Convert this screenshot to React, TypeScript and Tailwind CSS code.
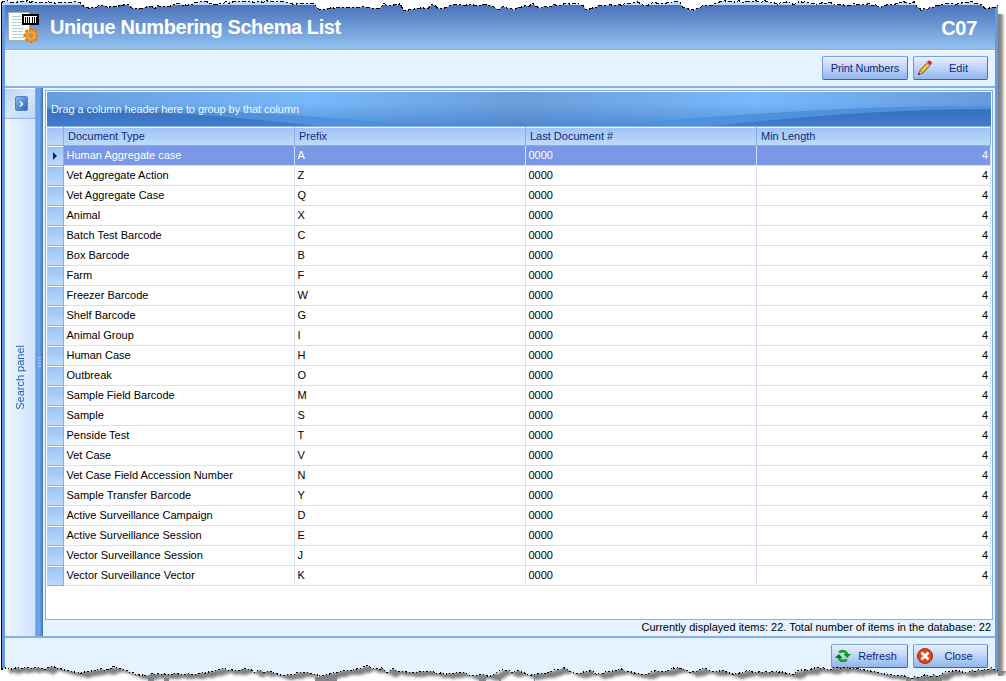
import React from "react";

const rows: [string, string][] = [
  ["Human Aggregate case", "A"],
  ["Vet Aggregate Action", "Z"],
  ["Vet Aggregate Case", "Q"],
  ["Animal", "X"],
  ["Batch Test Barcode", "C"],
  ["Box Barcode", "B"],
  ["Farm", "F"],
  ["Freezer Barcode", "W"],
  ["Shelf Barcode", "G"],
  ["Animal Group", "I"],
  ["Human Case", "H"],
  ["Outbreak", "O"],
  ["Sample Field Barcode", "M"],
  ["Sample", "S"],
  ["Penside Test", "T"],
  ["Vet Case", "V"],
  ["Vet Case Field Accession Number", "N"],
  ["Sample Transfer Barcode", "Y"],
  ["Active Surveillance Campaign", "D"],
  ["Active Surveillance Session", "E"],
  ["Vector Surveillance Session", "J"],
  ["Vector Surveillance Vector", "K"],
];

const topEdge: number[][] = [
  [1, 1], [30, 1], [50, 2], [60, 3], [68, 2], [80, 2], [84, 7], [90, 7], [100, 5], [110, 7], [117, 6], [122, 4], [128, 3], [133, 9], [142, 8], [148, 6], [155, 7], [160, 5], [166, 6], [174, 4], [180, 2], [184, 5], [192, 4], [197, 1], [206, 1], [210, 3], [220, 3], [228, 2], [236, 1], [260, 1], [280, 1], [288, 2], [295, 4], [305, 3], [314, 3], [317, 8], [323, 9], [332, 7], [345, 7], [360, 7], [380, 7], [384, 4], [392, 5], [400, 4], [404, 10], [410, 9], [416, 7], [425, 8], [432, 5], [440, 8], [448, 6], [454, 4], [465, 5], [472, 3], [477, 5], [485, 4], [493, 6], [500, 8], [503, 6], [508, 7], [514, 9], [520, 7], [533, 4], [540, 8], [548, 6], [562, 4], [572, 3], [580, 4], [588, 9], [596, 6], [610, 5], [622, 5], [628, 2], [638, 2], [644, 5], [655, 2], [665, 3], [673, 1], [680, 1], [684, 8], [694, 9], [700, 6], [712, 5], [718, 1], [740, 1], [770, 1], [778, 4], [785, 2], [797, 3], [805, 1], [815, 4], [820, 2], [830, 2], [836, 4], [845, 5], [855, 4], [866, 4], [875, 5], [882, 7], [888, 4], [900, 2], [914, 2], [917, 5], [921, 9], [933, 7], [944, 3], [960, 3], [972, 2], [982, 4], [985, 8], [995, 7], [998, 5],
];

const bottomEdge: number[][] = [
  [1, 668], [10, 668], [14, 667], [22, 668], [35, 667], [45, 668], [53, 666], [60, 669], [70, 671], [80, 673], [90, 670], [105, 669], [113, 667], [122, 667], [127, 671], [135, 673], [145, 675], [155, 673], [165, 674], [180, 673], [195, 674], [210, 671], [222, 668], [235, 670], [245, 668], [255, 671], [270, 671], [282, 675], [297, 673], [308, 672], [318, 675], [328, 674], [340, 670], [352, 669], [358, 669], [364, 665], [369, 666], [374, 668], [381, 668], [388, 672], [393, 669], [410, 672], [420, 671], [430, 670], [436, 673], [450, 673], [465, 672], [470, 675], [480, 674], [492, 675], [500, 670], [506, 669], [510, 671], [520, 671], [530, 675], [542, 674], [552, 670], [560, 668], [566, 667], [570, 672], [576, 673], [585, 671], [592, 670], [597, 673], [608, 671], [620, 669], [630, 671], [645, 674], [655, 670], [665, 671], [672, 668], [678, 667], [690, 672], [703, 668], [712, 671], [722, 670], [735, 674], [748, 670], [760, 672], [775, 671], [792, 674], [800, 670], [810, 669], [820, 667], [828, 669], [845, 667], [860, 669], [872, 671], [885, 674], [900, 675], [912, 677], [925, 675], [938, 675], [945, 671], [955, 670], [965, 672], [975, 670], [985, 669], [992, 667], [998, 671],
];

// Adds small, repeatable teeth between the given points.
function roughen(points: number[][]): string {
  const out: string[] = [];
  for (let i = 0; i < points.length - 1; i++) {
    const [x0, y0] = points[i];
    const [x1, y1] = points[i + 1];
    for (let x = x0; x < x1; x += 3) {
      const y = y0 + ((y1 - y0) * (x - x0)) / (x1 - x0);
      const n = Math.sin(x * 12.9898) * 43758.5453;
      const jitter = (n - Math.floor(n) - 0.5) * 1.8;
      out.push(`${x},${(Math.round(y + jitter) + 0.5).toFixed(1)}`);
    }
  }
  const last = points[points.length - 1];
  out.push(`${last[0]},${last[1]}`);
  return out.join(" ");
}

const topLine = roughen(topEdge);
const bottomLine = roughen(bottomEdge);

function TornEdges() {
  return (
    <svg className="pointer-events-none absolute inset-0" width="1006" height="681" viewBox="0 0 1006 681">
      <defs>
        <clipPath id="below">
          <polygon points={`0,668 ${bottomLine} 1006,671 1006,681 0,681`} />
        </clipPath>
        <filter id="soft" x="-5%" y="-100%" width="110%" height="300%">
          <feGaussianBlur stdDeviation="1.8" />
        </filter>
      </defs>
      <polygon points={`0,0 0,1 ${topLine} 1006,5 1006,0`} fill="#fff" />
      <polyline points={topLine} fill="none" stroke="#000" strokeWidth="1" strokeDasharray="4 2 2 2" shapeRendering="crispEdges" />
      <polygon points={`0,668 ${bottomLine} 998,681 0,681`} fill="#fff" />
      <g clipPath="url(#below)">
        <polyline points={bottomLine} transform="translate(8 1)" fill="none" stroke="#808080" strokeWidth="7" filter="url(#soft)" />
        <path d="M148 676h6v6h-6zM164 678h5v5h-5zM315 677h22v6h-22zM479 676h7v6h-7zM499 676h2v6h-2zM534 678h1v4h-1zM906 677h5v5h-5zM917 677h8v5h-8zM928 676h14v6h-14z" fill="#858585" />
      </g>
      <polyline points={bottomLine} fill="none" stroke="#000" strokeWidth="1" strokeDasharray="2 2 1 2" shapeRendering="crispEdges" />
    </svg>
  );
}

function SchemaIcon() {
  return (
    <svg width="34" height="34" viewBox="0 0 34 34" shapeRendering="crispEdges">
      <path d="M1.500 2.500h21v28h-21z" fill="#fbfdfd" stroke="#9bb3bb" />
      <path d="M5 6.500h12M5 9.500h11M5 12.500h11M5 15.500h11M5 18.500h12M5 21.500h11M5 24.500h11M5 27.500h12" stroke="#b4d3df" />
      <path d="M16 5h15v9h-15z" fill="#fff" stroke="#000" strokeWidth="1.400" />
      <path d="M18.500 7v6M20.500 7v6M22.500 7v6M25.500 7v6M27.500 7v6M29.500 7v6" stroke="#000" />
      <g shapeRendering="auto">
        <g stroke="#dd7d18" strokeWidth="3.400">
          <path d="M24 18v15M16.500 25.500h15M18.800 20.300l10.400 10.400M29.200 20.300 18.800 30.700" />
        </g>
        <circle cx="24" cy="25.500" r="5.600" fill="#f59424" />
        <circle cx="24" cy="25.500" r="3.800" fill="#ffab38" />
        <circle cx="24" cy="25.500" r="1.900" fill="#70a9df" stroke="#d97916" />
      </g>
    </svg>
  );
}

function PencilIcon() {
  return (
    <svg width="16" height="16" viewBox="0 0 16 16">
      <path d="M1.500 14.500 3 10.500 10 2.700 13 5.400 6 13z" fill="#f3ab2d" stroke="#87551c" strokeWidth=".9" />
      <path d="M4.500 11.500 11.300 4.200" stroke="#ffd476" strokeWidth="1.200" />
      <path d="M3 10.500 6 13 1.500 14.800z" fill="#e9cda3" stroke="#77583a" strokeWidth=".7" />
      <path d="M1.200 15l.9-2.200 1.300 1.300z" fill="#222" />
      <path d="m9.100 3.600 1.200-1.200 3 2.700-1.200 1.200z" fill="#a4acb5" />
      <path d="m10.300 2.300 1.300-1.300c1-.7 3.600 1.200 2.900 2.700l-1.200 1.300z" fill="#e4202a" stroke="#a31a20" strokeWidth=".5" />
    </svg>
  );
}

function RefreshIcon() {
  return (
    <svg width="16" height="14" viewBox="0 0 16 14">
      <path d="M4.200 3.600C6 1.400 10.500 1.300 12 5" fill="none" stroke="#12a01e" strokeWidth="2.700" />
      <path d="M8.300 5H16l-3.800 4z" fill="#12901e" />
      <path d="M11.800 10.400C10 12.600 5.500 12.700 4 9" fill="none" stroke="#12a01e" strokeWidth="2.700" />
      <path d="M7.700 9H0l3.800-4z" fill="#0a7418" />
    </svg>
  );
}

function CloseIcon() {
  return (
    <svg width="16" height="16" viewBox="0 0 16 16">
      <circle cx="8" cy="8" r="7.500" fill="#e6400f" stroke="#aa2b10" />
      <path d="m5.500 5.500 5 5m0-5-5 5" stroke="#fff" strokeWidth="2.900" strokeLinecap="square" />
    </svg>
  );
}

function Button({ label, icon, width }: { label: string; icon?: React.ReactNode; width: string }) {
  return (
    <button className={`flex h-6 shrink-0 items-center rounded-[2px] border border-t-[#7ca3e4] border-r-[#4f6dbd] border-b-[#3f5db0] border-l-[#6f95dc] bg-linear-to-b from-[#e9f1ff] via-[#bdd4f8] to-[#94b6ec] text-[#102a82] ${width}`}>
      {icon && <span className="ml-[3px] flex w-4 shrink-0 justify-center">{icon}</span>}
      <span className={`flex-1 text-center whitespace-nowrap ${icon ? "pr-[3px]" : "tracking-[-0.15px]"}`}>{label}</span>
    </button>
  );
}

const columns = "grid grid-cols-[17px_231px_231px_231px_234px]";

function Grid() {
  return (
    <div className="mr-[2px] ml-[2px] flex h-[530px] flex-col border border-[#86aeea] bg-white p-px">
      <div className="relative h-[34px] overflow-hidden bg-linear-to-r from-[#679fdf] via-[#6ba0de] to-[#679cda]">
        <svg className="absolute inset-0 h-full w-full" viewBox="0 0 944 34" preserveAspectRatio="none">
          <defs>
            <linearGradient id="sheen">
              <stop offset="0" stopColor="#669ddd" />
              <stop offset=".28" stopColor="#79b8fa" />
              <stop offset=".5" stopColor="#6b9edb" />
              <stop offset=".75" stopColor="#79b8fb" />
              <stop offset="1" stopColor="#679cda" />
            </linearGradient>
            <linearGradient id="depth" x2="0" y2="1">
              <stop offset=".3" stopColor="#3c7ccc" stopOpacity="0" />
              <stop offset="1" stopColor="#3474c7" stopOpacity=".55" />
            </linearGradient>
            <linearGradient id="wave" x2="0" y2="1">
              <stop offset="0" stopColor="#3770c1" />
              <stop offset="1" stopColor="#427ccd" />
            </linearGradient>
          </defs>
          <path d="M0 0h944v34H0z" fill="url(#sheen)" />
          <path d="M0 0h944v34H0z" fill="url(#depth)" />
          <path d="M0 15C110 14 220 20 380 34H0z" fill="#4f91dc" />
          <path d="M550 34C680 24 780 14 944 14v20z" fill="#4f91dc" />
          <path d="M0 17C90 17 180 24 272 34H0z" fill="url(#wave)" />
          <path d="M665 34C760 24 850 17 944 17v17z" fill="url(#wave)" />
        </svg>
        <span className="relative block pl-1 leading-[34px] tracking-[-0.08px] text-[#eef6ff]">Drag a column header here to group by that column</span>
      </div>
      <div className={`${columns} h-5 border-t border-b border-[#86aeea] bg-linear-to-b from-[#9fc3f3] to-[#bddaf9] leading-[18px] text-[#102a82] shadow-[inset_0_1px_0_#f2f8ff]`}>
        <span className="border-r border-[#86aeea]" />
        <span className="border-r border-[#86aeea] pl-1">Document Type</span>
        <span className="border-r border-[#86aeea] pl-1">Prefix</span>
        <span className="border-r border-[#86aeea] pl-1">Last Document #</span>
        <span className="border-r border-[#86aeea] pl-1">Min Length</span>
      </div>
      {rows.map(([name, prefix], i) => (
        <div key={name} className={`${columns} h-5 shrink-0 leading-[18px] ${i === 0 ? "text-white" : "text-black"}`}>
          <span className="flex items-center justify-center border-r border-b border-[#86aeea] bg-linear-to-b from-[#9bc0f2] to-[#bddafa] shadow-[inset_0_1px_0_#f2f8ff]">
            {i === 0 && (
              <svg width="4" height="8" viewBox="0 0 4 8">
                <path d="M0 0l4 4-4 4z" fill="#0c2480" />
              </svg>
            )}
          </span>
          <span className={`border-r border-b border-[#d2e1f9] pl-[2.500px] ${i === 0 ? "bg-[#7b98e6]" : ""}`}>{name}</span>
          <span className={`border-r border-b border-[#d2e1f9] pl-[2.500px] ${i === 0 ? "bg-[#7b98e6]" : ""}`}>{prefix}</span>
          <span className={`border-r border-b border-[#d2e1f9] pl-[2.500px] ${i === 0 ? "bg-[#7b98e6]" : ""}`}>0000</span>
          <span className={`border-r border-b border-[#d2e1f9] pr-[2px] text-right ${i === 0 ? "bg-[#7b98e6]" : ""}`}>4</span>
        </div>
      ))}
    </div>
  );
}

function SearchPanel() {
  return (
    <aside className="flex w-[38px] shrink-0">
      <div className="flex w-[31px] flex-col border-r border-[#86aeea] bg-linear-to-r from-[#eff7ff] to-[#cfe3fd]">
        <div className="flex h-[31px] shrink-0 items-center justify-center border-t border-b border-t-white border-b-[#91b4ec] bg-linear-to-br from-[#bfd5f8] via-[#d6e6fc] to-[#bdd3f8] pl-[3px]">
          <span className="flex h-[15px] w-[13px] items-center justify-center rounded-[2px] border border-[#5380c8] bg-linear-to-br from-[#8eb7ec] to-[#2e65b8]">
            <svg width="5" height="6" viewBox="0 0 5 6">
              <path d="M1 .5 3.500 3 1 5.500" fill="none" stroke="#fff" strokeWidth="1.400" />
            </svg>
          </span>
        </div>
        <div className="flex flex-1 items-center justify-center">
          <span className="rotate-180 whitespace-nowrap text-[#2d61b4] [writing-mode:vertical-rl]">Search panel</span>
        </div>
      </div>
      <div className="flex w-[7px] flex-col items-center justify-center gap-[2px] bg-linear-to-r from-[#6a9ee4] via-[#6ea4e6] to-[#3f70be]">
        <i className="h-px w-[3px] bg-[#a9cbf5]" />
        <i className="h-px w-[3px] bg-[#a9cbf5]" />
        <i className="h-px w-[3px] bg-[#a9cbf5]" />
        <i className="h-px w-[3px] bg-[#a9cbf5]" />
      </div>
    </aside>
  );
}

export default function App() {
  return (
    <div className="relative flex h-[681px] w-[1006px] overflow-hidden bg-white pl-px font-['Liberation_Sans',Arial,sans-serif] text-[11px]">
      <div className="flex w-[997px] shrink-0 flex-col border-l border-black bg-[#e5f2ff]">
        <div className="h-[5px] shrink-0 bg-[#b9d8fa]" />
        <div className="flex min-h-0 flex-1 border-r-[3px] border-l-[3px] border-[#659be3]">
          <div className="flex min-w-0 flex-1 flex-col">
            <header className="flex h-[45px] shrink-0 items-center border-b border-[#86aeea] bg-linear-to-b from-[#4c72b9] to-[#93c3f2] pr-[18px] pl-[2px] text-white">
              <SchemaIcon />
              <h1 className="ml-[9px] flex-1 text-[20px] font-bold tracking-[-0.41px] whitespace-nowrap">Unique Numbering Schema List</h1>
              <span className="pt-px text-[20px] font-bold tracking-[-0.3px]">C07</span>
            </header>
            <div className="flex h-[38px] shrink-0 items-start justify-end gap-[5px] border-t border-b-2 border-t-white border-b-[#86aeea] pt-[5px] pr-[7px]">
              <Button label="Print Numbers" width="w-[86px]" />
              <Button label="Edit" icon={<PencilIcon />} width="w-[75px]" />
            </div>
            <div className="flex h-[550px] shrink-0 border-b-2 border-[#86aeea]">
              <SearchPanel />
              <main className="flex min-w-0 flex-1 flex-col pt-[2px]">
                <Grid />
                <div className="pr-1 text-right leading-[15px] whitespace-nowrap text-black">Currently displayed items: 22. Total number of items in the database: 22</div>
              </main>
            </div>
            <footer className="flex items-start justify-end gap-[5px] pt-[6px] pr-[7px]">
              <Button label="Refresh" icon={<RefreshIcon />} width="w-[77px]" />
              <Button label="Close" icon={<CloseIcon />} width="w-[75px]" />
            </footer>
          </div>
        </div>
      </div>
      <div className="mt-[14px] mb-[5px] w-[7px] rounded-tr bg-linear-to-r from-[#7b7b7b] via-[#969696] to-white" />
      <TornEdges />
    </div>
  );
}
